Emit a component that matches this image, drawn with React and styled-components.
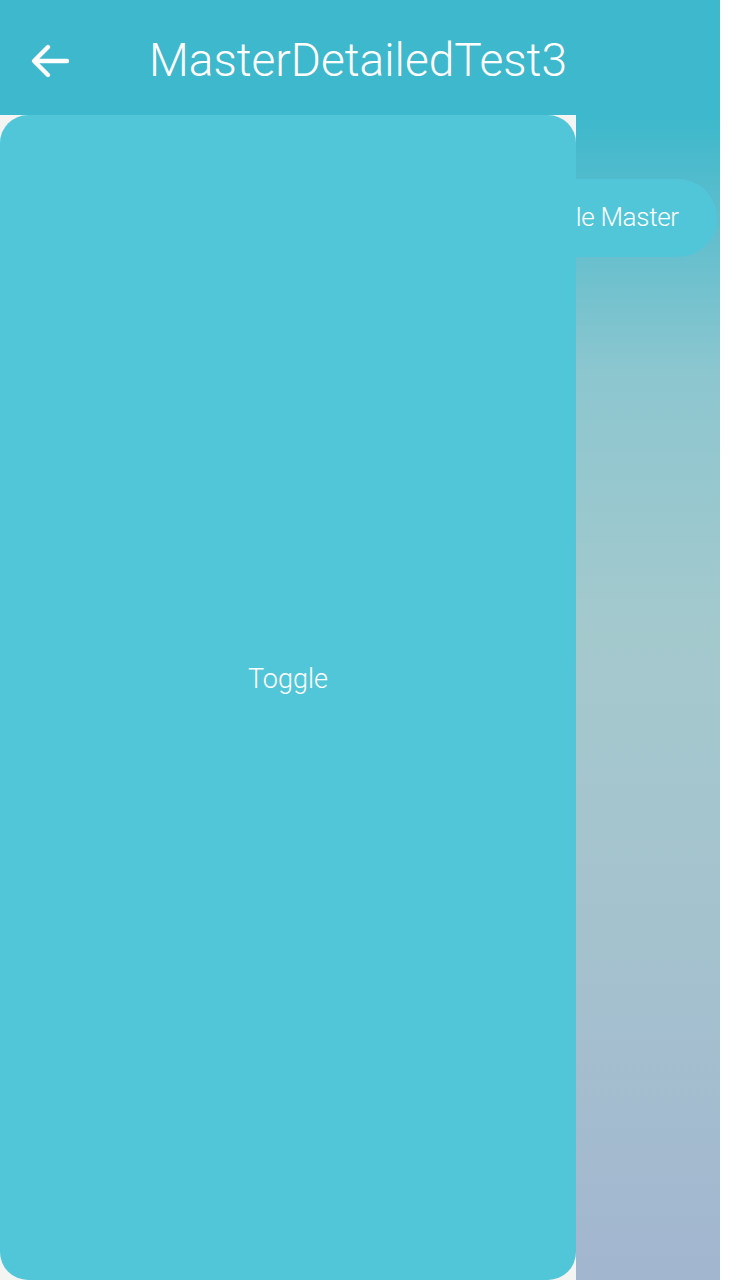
import React from 'react';
import styled, { createGlobalStyle } from 'styled-components';

const GlobalStyle = createGlobalStyle`
    html, body {
        margin: 0;
        padding: 0;
        background: #ffffff;
    }
    body {
        font-family: Roboto, "Liberation Sans", sans-serif;
    }
`;

const App = () => {
    return (
        <>
            <GlobalStyle />
            <Screen>
                <Header>
                    <BackButton aria-label="back">
                        <svg width="40" height="36" viewBox="0 0 40 36" fill="none">
                            <path d="M37 18H5M18 4L4 18l14 14" stroke="#fff" strokeWidth="4.4" strokeLinecap="round" strokeLinejoin="round" />
                        </svg>
                    </BackButton>
                    <Title>MasterDetailedTest3</Title>
                </Header>
                <Body>
                    <Master>
                        <Panel>Toggle</Panel>
                    </Master>
                    <Detail>
                        <PillButton>Toggle Master</PillButton>
                    </Detail>
                </Body>
            </Screen>
        </>
    );
};

const Screen = styled.div`
    width: 720px;
    height: 1280px;
    display: flex;
    flex-direction: column;
    overflow: hidden;
`
const Header = styled.div`
    height: 115px;
    flex: none;
    background: #3db8cc;
    display: flex;
    align-items: center;
    padding: 6px 0 0 30px;
    box-sizing: border-box;
`
const BackButton = styled.div`
    width: 40px;
    height: 36px;
    display: flex;
`
const Title = styled.div`
    margin-left: 79px;
    margin-top: -2px;
    color: #ffffff;
    font-size: 46px;
    font-weight: 300;
    letter-spacing: 0px;
`
const Body = styled.div`
    flex: 1;
    position: relative;
    background: linear-gradient(180deg, #3db8cc 0%, #8cc6cf 22%, #a4c9cd 45%, #a4c0ce 75%, #a2b6cf 100%);
`
const Master = styled.div`
    position: absolute;
    left: 0;
    top: 0;
    bottom: 0;
    width: 576px;
    background: #f4f4f2;
    z-index: 2;
    display: flex;
`
const Panel = styled.div`
    flex: 1;
    background: #52c6d9;
    border-radius: 28px;
    display: flex;
    align-items: center;
    justify-content: center;
    padding-bottom: 37px;
    color: #ffffff;
    font-size: 27px;
    font-weight: 300;
`
const Detail = styled.div`
    display: flex;
    justify-content: flex-end;
    padding: 64px 3px 0 0;
`
const PillButton = styled.div`
    width: 250px;
    height: 78px;
    border-radius: 39px;
    background: #52c6d9;
    color: #ffffff;
    font-size: 26px;
    font-weight: 300;
    letter-spacing: -0.3px;
    display: flex;
    align-items: center;
    justify-content: center;
    padding: 0 0 2px 14px;
    box-sizing: border-box;
`

export default App;
